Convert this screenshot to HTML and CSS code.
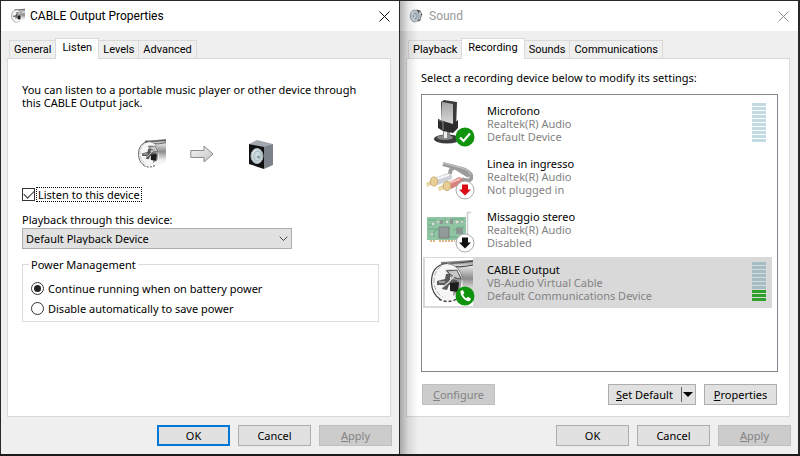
FILE: index.html
```html
<!DOCTYPE html>
<html lang="en">
<head>
<meta charset="utf-8">
<title>Sound settings</title>
<link rel="stylesheet" href="styles.css">
</head>
<body>
<svg class="defs" width="0" height="0" aria-hidden="true">
  <defs>
    <linearGradient id="tube" x1="0" y1="0" x2="0" y2="1">
      <stop offset="0" stop-color="#666"/><stop offset=".15" stop-color="#e4e4e4"/><stop offset=".45" stop-color="#8c8c8c"/><stop offset=".75" stop-color="#eee"/><stop offset="1" stop-color="#fff"/>
    </linearGradient>
    <linearGradient id="arrow" x1="0" y1="0" x2="1" y2="1">
      <stop offset="0" stop-color="#f6f6f6"/><stop offset="1" stop-color="#c4c4c4"/>
    </linearGradient>
    <linearGradient id="mic" x1="0" y1="0" x2="0" y2="1">
      <stop offset="0" stop-color="#a4a4a4"/><stop offset="1" stop-color="#e0e0e0"/>
    </linearGradient>
    <linearGradient id="cone" x1="0" y1="0" x2="1" y2="1">
      <stop offset="0" stop-color="#f2f6f7"/><stop offset=".6" stop-color="#c3ced2"/><stop offset="1" stop-color="#f4f7f8"/>
    </linearGradient>
    <symbol id="jack" viewBox="0 0 48 48">
      <path d="M16 4 48 2V36L28 43Z" fill="url(#tube)"/>
      <path d="M16 5Q33 6 48 3M26 8Q36 10 48 7" fill="none" stroke="#444" stroke-width="1.2"/>
      <ellipse cx="22" cy="24" rx="15.500" ry="18.500" fill="#f6f6f6"/>
      <path d="M22 5.500Q6 7 6.500 25 7 36 15 41" fill="none" stroke="#444" stroke-width="1.2"/>
      <path d="M22 5.500Q36 7 37.500 22" fill="none" stroke="#888"/>
      <path d="M16 8Q9 13 9 24 10 35 18 39" fill="none" stroke="#aaa" stroke-dasharray="5 2"/>
      <path d="M20 12Q33 9 37 21L35 33 28 38 29 24Z" fill="#999"/>
      <path d="M22 13 32 12 36 21 31 20 26 17Z" fill="#c8c8c8" stroke="#555"/>
      <path d="M12 23 20 21 21 16 25 16 25 21 32 22 33 26 24 27 22 32 17 31 19 27 12 27Z" fill="#5a5a5a"/>
      <path d="M25 25 34 24 33 34 25 33Z" fill="#1c1c1c"/>
      <path d="M14 24H20M18 29 24 24 29 18" fill="none" stroke="#ddd" stroke-width="1.2"/>
      <path d="M14 41Q22 46 32 41" fill="none" stroke="#444" stroke-width="1.5" stroke-dasharray="3 2"/>
    </symbol>
    <symbol id="badge-down" viewBox="0 0 20 20">
      <circle cx="10" cy="10" r="9" fill="#fff" stroke="#aaa" stroke-width="1"/>
      <path d="M7 4.500H13V9.500H16L10 15.500 4 9.500H7Z" fill="currentColor"/>
    </symbol>
  </defs>
</svg>

<main class="desktop">
  <section class="dialog" aria-label="CABLE Output Properties">
    <header class="titlebar">
      <svg class="app-icon" viewBox="2 2 46 44"><use href="#jack" width="48" height="48"/></svg>
      <h1>CABLE Output Properties</h1>
      <button class="close" type="button" aria-label="Close"><svg viewBox="0 0 11 11"><path d="M.5.5 10.500 10.500M10.500.5.5 10.500"/></svg></button>
    </header>
    <div class="content">
      <nav class="tabs" role="tablist">
        <button type="button" role="tab">General</button>
        <button type="button" role="tab" aria-selected="true">Listen</button>
        <button type="button" role="tab">Levels</button>
        <button type="button" role="tab">Advanced</button>
      </nav>
      <div class="panel listen" role="tabpanel">
        <p class="intro">You can listen to a portable music player or other device through this CABLE Output jack.</p>
        <div class="route">
          <svg class="route-jack" viewBox="5 0 42 48"><use href="#jack" width="48" height="48"/></svg>
          <svg class="route-arrow" viewBox="0 0 24 18"><path d="M.8 5.500H14V1L23 9 14 17V12.500H.8Z" fill="url(#arrow)" stroke="#8c8c8c"/></svg>
          <svg class="route-speaker" viewBox="0 0 26 30">
            <path d="M1 5 9 1 25 5 17 9Z" fill="#a2a8ad"/><path d="M16 8 25 5V26L16 30Z" fill="#7c8289"/>
            <path d="M1 5 16 8V30L1 25Z" fill="#101010"/>
            <ellipse cx="9" cy="17" rx="6" ry="7.500" fill="url(#cone)" stroke="#a3b1b7"/>
            <ellipse cx="9.500" cy="17" rx="3.700" ry="5" fill="#ccdade" stroke="#a2b2b9"/><circle cx="10.500" cy="18" r="1.500" fill="#7f98a2"/>
          </svg>
        </div>
        <div class="check-row">
          <input type="checkbox" id="listen" checked>
          <label for="listen">Listen to this device</label>
        </div>
        <label class="field-label" for="playback">Playback through this device:</label>
        <div class="select-box">
          <select id="playback"><option>Default Playback Device</option></select>
          <svg viewBox="0 0 9 6"><path d="M.7.7 4.500 4.500 8.300.7"/></svg>
        </div>
        <fieldset>
          <legend>Power Management</legend>
          <div class="radio-row"><input type="radio" name="power" id="continue" checked><label for="continue">Continue running when on battery power</label></div>
          <div class="radio-row"><input type="radio" name="power" id="disable"><label for="disable">Disable automatically to save power</label></div>
        </fieldset>
      </div>
      <footer class="actions">
        <button class="btn default" type="button">OK</button>
        <button class="btn" type="button">Cancel</button>
        <button class="btn" type="button" disabled><u>A</u>pply</button>
      </footer>
    </div>
  </section>

  <section class="dialog inactive" aria-label="Sound">
    <header class="titlebar">
      <svg class="app-icon" viewBox="0 0 16 16">
        <path d="M8 1 12 2 14 6 12 13 9 14Z" fill="#505356"/><path d="M11 3 13 5 12 11 10 13" fill="#cfcfcf"/>
        <ellipse cx="6" cy="8" rx="4.700" ry="6.300" fill="#c6d1d5" stroke="#87949a"/><ellipse cx="6.500" cy="8" rx="2.600" ry="4" fill="#94a8b1"/><path d="M3 4 7 8 4 12" fill="none" stroke="#eef3f5"/>
      </svg>
      <h1>Sound</h1>
      <button class="close" type="button" aria-label="Close"><svg viewBox="0 0 11 11"><path d="M.5.5 10.500 10.500M10.500.5.5 10.500"/></svg></button>
    </header>
    <div class="content">
      <nav class="tabs" role="tablist">
        <button type="button" role="tab">Playback</button>
        <button type="button" role="tab" aria-selected="true">Recording</button>
        <button type="button" role="tab">Sounds</button>
        <button type="button" role="tab">Communications</button>
      </nav>
      <div class="panel recording" role="tabpanel">
        <p class="prompt">Select a recording device below to modify its settings:</p>
        <ul class="devices">
          <li>
            <div class="device-icon">
              <svg viewBox="0 0 48 48">
                <ellipse cx="22" cy="40" rx="13" ry="4.500" fill="#3c3c3c"/><ellipse cx="20" cy="38.500" rx="8" ry="2.500" fill="#888"/>
                <path d="M18 31H25V39H18Z" fill="#8a8a8a"/><path d="M19 31H22V39H19Z" fill="#eee"/>
                <path d="M16 3 19 1 32 3 31 30 17 27Z" fill="#3a3a3a"/><path d="M17 3 28 5 28 28 17 26Z" fill="url(#mic)"/>
                <path d="M13 20 18 22 28 25 33 21V29L28 34 18 32 13 29Z" fill="#2c2c2c"/><path d="M14 21 18 23V31" stroke="#888" fill="none"/>
              </svg>
              <svg class="badge" viewBox="0 0 20 20"><circle cx="10" cy="10" r="9.500" fill="#10930d"/><path d="M5 10.500 8.500 14 15 6.500" fill="none" stroke="#fff" stroke-width="2.200"/></svg>
            </div>
            <div class="device-text"><strong>Microfono</strong><span>Realtek(R) Audio</span><span>Default Device</span></div>
            <div class="meter"><i></i><i></i><i></i><i></i><i></i><i></i><i></i><i></i><i></i><i></i></div>
          </li>
          <li>
            <div class="device-icon">
              <svg viewBox="0 0 48 48">
                <path d="M18 12 40 18Q48 22 46 27 44 30 37 27M25 22Q25 15 31 16L44 24" fill="none" stroke="#9c9c9c" stroke-width="4"/>
                <path d="M18 11 40 17Q45 19 46 23" fill="none" stroke="#c9c9c9"/>
                <path d="M9 26 23 21Q28 22 27 27L13 33Z" fill="#cdd0d6"/><path d="M11 27 24 23" stroke="#f6f6f8" stroke-width="2"/>
                <path d="M22 31 34 25Q39 26 38 31L26 37Z" fill="#d8807c"/><path d="M24 31 35 27" stroke="#f3c2be" stroke-width="2"/>
                <path d="M1 31 7 28 8 32 2 35Z" fill="#ead7a8"/><path d="M13 35 19 32 20 37 14 39Z" fill="#ead7a8"/>
                <ellipse cx="9" cy="29.500" rx="3.500" ry="4.500" fill="#e9cf95" stroke="#c9aa70"/><ellipse cx="22" cy="34" rx="3.500" ry="4.500" fill="#e9cf95" stroke="#c9aa70"/>
              </svg>
              <svg class="badge red"><use href="#badge-down"/></svg>
            </div>
            <div class="device-text"><strong>Linea in ingresso</strong><span>Realtek(R) Audio</span><span>Not plugged in</span></div>
          </li>
          <li>
            <div class="device-icon">
              <svg viewBox="0 0 48 48">
                <path d="M42.500 36V7.500H46" fill="none" stroke="#ccc" stroke-width="1.500"/>
                <path d="M2 12H41V35H2Z" fill="#8fc5a2"/>
                <path d="M3 15H11M3 20H9M3 24H12M27 14H39M24 32H39M9 32V27L13 24M28 26 33 22H39M20 13V19" fill="none" stroke="#6ba885"/>
                <path d="M14 22H24V33H14Z" fill="#939a9a" stroke="#77807c"/><path d="M31 23H38V29H31ZM15 15H18V19H15ZM25 14H28V19H25Z" fill="#8a9490"/>
                <g fill="#d9e4dc" stroke="#84a28e" stroke-width=".6"><circle cx="8" cy="19" r="1.800"/><circle cx="13" cy="17" r="1.500"/><circle cx="22" cy="17" r="1.800"/><circle cx="32" cy="17" r="2"/><circle cx="37" cy="17" r="1.500"/><circle cx="7" cy="29" r="1.500"/></g>
                <path d="M5 36H11M14 36H30" stroke="#ddb580" stroke-width="2" stroke-dasharray="2 1"/>
              </svg>
              <svg class="badge black"><use href="#badge-down"/></svg>
            </div>
            <div class="device-text"><strong>Missaggio stereo</strong><span>Realtek(R) Audio</span><span>Disabled</span></div>
          </li>
          <li class="selected">
            <div class="device-icon jack-tile">
              <svg viewBox="0 0 48 48"><use href="#jack"/></svg>
              <svg class="badge" viewBox="0 0 20 20"><circle cx="10" cy="10" r="9.500" fill="#10930d"/><path d="M5.500 5 7.800 4 9.500 7.200 8 8.500Q9 11.200 11.400 12.200L13 10.800 16 12.800 14.800 15Q12.500 16 9 13 5 9.300 5.500 5Z" fill="#fff"/></svg>
            </div>
            <div class="device-text"><strong>CABLE Output</strong><span>VB-Audio Virtual Cable</span><span>Default Communications Device</span></div>
            <div class="meter"><i></i><i></i><i></i><i></i><i></i><i></i><i></i><i class="on"></i><i class="on"></i><i class="on"></i></div>
          </li>
        </ul>
        <div class="device-actions">
          <button class="btn" type="button" disabled><u>C</u>onfigure</button>
          <button class="btn split" type="button"><span><u>S</u>et Default</span><svg viewBox="0 0 12 15"><path d="M.5 0V15" stroke="#666"/><path d="M2 5H12L7 10Z"/></svg></button>
          <button class="btn" type="button"><u>P</u>roperties</button>
        </div>
      </div>
      <footer class="actions">
        <button class="btn" type="button">OK</button>
        <button class="btn" type="button">Cancel</button>
        <button class="btn" type="button" disabled><u>A</u>pply</button>
      </footer>
    </div>
  </section>
</main>
</body>
</html>
```
FILE: styles.css
```css
* { box-sizing: border-box; }

body {
  margin: 0;
  background: #1b1a1c;
  color: #000;
  font: 11px/13px "Noto Sans", "Open Sans", sans-serif;
}

h1, p, ul { margin: 0; padding: 0; }
button, select, input { font: inherit; color: inherit; margin: 0; }
u { text-decoration-thickness: 1px; text-underline-offset: 1px; text-decoration-skip-ink: none; }
svg { display: block; }
.defs { position: absolute; }

.desktop {
  display: grid;
  grid-template-columns: 1fr 1fr;
  min-height: 100vh;
  padding-bottom: 2px;
}

.dialog {
  position: relative;
  display: flex;
  flex-direction: column;
  background: #efefef;
  border: 1px solid #29272a;
  border-bottom: 0;
}

.dialog.inactive { border-left: 0; border-right-width: 2px; }

/* shadow cast by the active window in front */
.dialog.inactive::before {
  content: "";
  position: absolute;
  inset: 0 auto 0 0;
  width: 18px;
  background: linear-gradient(to right, rgba(0, 0, 0, .3), rgba(0, 0, 0, .1) 45%, transparent);
  pointer-events: none;
  z-index: 1;
}

.titlebar {
  display: flex;
  align-items: center;
  gap: 5px;
  height: 30px;
  padding: 0 9px;
  background: #fff;
}

.titlebar h1 { flex: 1; font: 400 12px/16px Roboto, "Noto Sans", sans-serif; }
.app-icon { width: 15px; height: 16px; }
.close { padding: 0; border: 0; background: none; }
.close svg { width: 11px; height: 11px; fill: none; stroke: #111; }
.inactive h1 { color: #999; }
.inactive .close svg { stroke: #888; }

.content {
  flex: 1;
  display: flex;
  flex-direction: column;
  padding: 7px 8px 8px 6px;
}

.tabs { display: flex; align-items: flex-end; padding-left: 2px; }

.tabs button {
  height: 18px;
  margin-right: -1px;
  padding: 0 4px;
  border: 1px solid #d9d9d9;
  border-bottom: 0;
  background: #efefef;
  font-family: Roboto, "Noto Sans", sans-serif;
}

.tabs [aria-selected] {
  z-index: 1;
  height: 21px;
  margin-bottom: -1px;
  padding: 0 6px 3px;
  background: #fff;
}

.panel { flex: 1; border: 1px solid #d9d9d9; background: #fff; }
.listen { padding: 24px 11px 0 14px; }
.intro { max-width: 340px; }

.route {
  display: flex;
  align-items: center;
  gap: 24px;
  height: 32px;
  margin: 29px 0 16px;
  padding-left: 115px;
}
.route-jack { width: 29px; height: 32px; }
.route-arrow { width: 24px; height: 18px; }
.route-speaker { width: 26px; height: 30px; margin-left: 10px; }

.check-row, .radio-row { display: flex; align-items: center; }
.check-row { gap: 2px; height: 17px; margin-bottom: 10px; }
.check-row label { padding: 0 1px; outline: 1px dotted #000; }

input { appearance: none; width: 13px; height: 13px; border: 1px solid #333; background: #fff; }
input[type="checkbox"] { display: grid; place-items: center; }
input[type="checkbox"]::before {
  content: "";
  width: 9px;
  height: 5px;
  margin-top: -3px;
  border: solid #333;
  border-width: 0 0 1px 1px;
  transform: rotate(-45deg);
}
input[type="radio"] { border-radius: 50%; }
input[type="radio"]:checked { padding: 2px; background: #222 content-box; }

.field-label { display: block; margin-bottom: 2px; }

.select-box { position: relative; width: 270px; max-width: 100%; }
.select-box select {
  appearance: none;
  display: block;
  width: 100%;
  height: 21px;
  padding: 0 3px;
  border: 1px solid #adadad;
  border-radius: 0;
  background: #e1e1e1;
}
.select-box svg {
  position: absolute;
  top: 8px;
  right: 4px;
  width: 9px;
  height: 6px;
  fill: none;
  stroke: #444;
  pointer-events: none;
}

fieldset { margin: 9px 0 0; padding: 7px 8px 3px 8px; border: 1px solid #dcdcdc; }
legend { padding: 0 2px; margin-left: -2px; }
.radio-row { gap: 4px; height: 20px; }

.recording { padding: 12px 11px 11px 14px; display: flex; flex-direction: column; }
.prompt { margin-bottom: 10px; }

.devices {
  flex: 1;
  list-style: none;
  border: 1px solid #828790;
  padding: 3px 5px 3px 1px;
}
.devices li {
  display: flex;
  align-items: flex-start;
  height: 51px;
  margin-bottom: 2px;
  padding: 1px 6px 0 2px;
}
.devices .selected { background: #d9d9d9; }

.device-icon { position: relative; width: 48px; height: 48px; }
.device-icon svg { width: 48px; height: 48px; }
.device-icon .badge { position: absolute; right: -2px; bottom: 0; width: 20px; height: 20px; }
.jack-tile { background: #fff; }
.red { color: #dc0a14; }
.black { color: #111; }

.device-text { flex: 1; display: flex; flex-direction: column; padding: 5px 0 0 14px; }
.device-text strong { font-weight: 400; }
.device-text span { color: #838383; }

.meter { display: flex; flex-direction: column; gap: 1px; padding-top: 4px; }
.meter i { width: 14px; height: 3px; background: #c1dbe2; }
.selected .meter i { background: #a4bec5; }
.selected .meter .on { background: #30a02c; }

.device-actions { display: flex; gap: 8px; margin-top: 12px; padding: 0 1px; }
.device-actions .btn:first-child { margin-right: auto; }

.actions { display: flex; justify-content: flex-end; gap: 8px; padding-top: 8px; margin-right: -1px; }

.btn {
  width: 73px;
  height: 21px;
  padding: 0;
  border: 1px solid #adadad;
  background: #e1e1e1;
}
.btn.default { border: 2px solid #0078d7; }
.btn:disabled { background: #ccc; border-color: #bfbfbf; color: #838383; }
.split { display: flex; align-items: center; justify-content: space-between; width: 88px; padding: 0 2px 0 7px; }
.split svg { width: 12px; height: 15px; }
```
